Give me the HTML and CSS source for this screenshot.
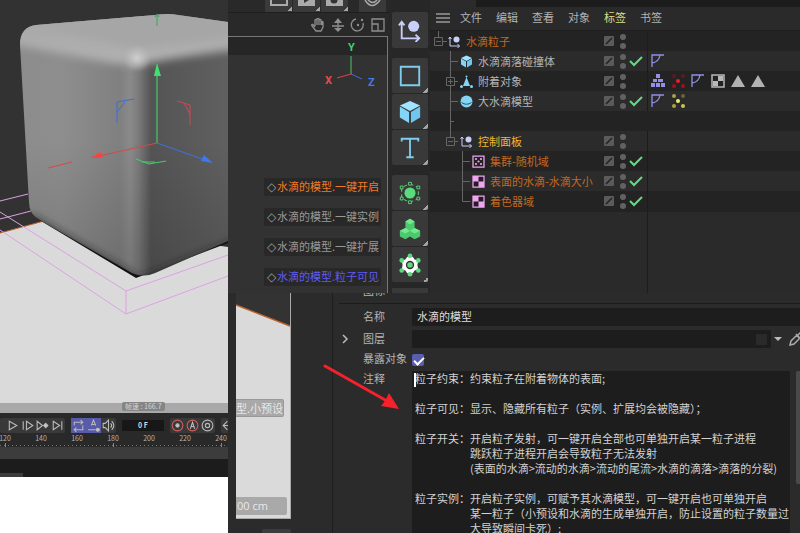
FILE: index.html
```html
<!DOCTYPE html>
<html lang="zh-CN">
  <head>
    <meta charset="utf-8">
    <title>水滴粒子</title>
    <link rel="stylesheet" href="styles.css">
  </head>
  <body>
    <!-- shared icons -->
    <svg class="defs" aria-hidden="true">
      <symbol id="null" viewBox="0 0 26 26">
        <path d="M4 5v17h19M1 8l3-4 3 4M19 18l4 4-4 4" fill="none" stroke="#c9cff8" stroke-width="2"/>
        <circle cx="17" cy="9" r="6" fill="#c9cff8"/>
      </symbol>
      <symbol id="cube" viewBox="0 0 26 26">
        <path d="M13 1l11 5-11 6L2 6z" fill="#a0e4ff"/>
        <path d="M2 7l10 6v12L2 19z" fill="#83d4f7"/>
        <path d="M24 7l-10 6v12l10-6z" fill="#6fc6ee"/>
      </symbol>
      <symbol id="cone" viewBox="0 0 26 26">
        <path d="M13 4l7 18H6z" fill="#83d4f7"/>
        <circle cx="13" cy="3" r="2" fill="#83d4f7"/>
        <circle cx="3" cy="23" r="3" fill="#83d4f7"/>
        <circle cx="23" cy="23" r="3" fill="#83d4f7"/>
      </symbol>
      <symbol id="sphere" viewBox="0 0 26 26">
        <circle cx="13" cy="13" r="12" fill="#83d4f7"/>
        <path d="M3 15q10 7 20 0" fill="none" stroke="#2a5668" stroke-width="2"/>
      </symbol>
      <symbol id="dice" viewBox="0 0 26 26">
        <path d="M2 2h22v22H2z" fill="none" stroke="#eda6ef" stroke-width="2.5"/>
        <g fill="#eda6ef"><circle cx="8" cy="8" r="2.2"/><circle cx="18" cy="8" r="2.2"/><circle cx="13" cy="13" r="2.2"/><circle cx="8" cy="18" r="2.2"/><circle cx="18" cy="18" r="2.2"/></g>
      </symbol>
      <symbol id="checker" viewBox="0 0 26 26">
        <path d="M2 2h22v22H2z" fill="#251c26" stroke="#eda6ef" stroke-width="2.5"/>
        <path d="M2 2h11v11H2zM13 13h11v11H13z" fill="#eda6ef"/>
      </symbol>
      <symbol id="state" viewBox="0 0 40 20">
        <rect x="4" y="5" width="10" height="10" rx="1" fill="#5b5b5b"/>
        <path d="M6 13l6-6" stroke="#242424" stroke-width="1.6"/>
        <circle cx="23" cy="6" r="3" fill="#626262"/>
        <circle cx="23" cy="15" r="3" fill="#626262"/>
      </symbol>
      <symbol id="check" viewBox="0 0 14 20">
        <path d="M1 10l4 4 8-8" fill="none" stroke="#64dc84" stroke-width="2"/>
      </symbol>
      <symbol id="phong" viewBox="0 0 14 14">
        <path d="M1 13V1h12M1 9Q8 8 9 1" fill="none" stroke="#938fe8" stroke-width="1.3"/>
      </symbol>
      <symbol id="triangle" viewBox="0 0 14 14"><path d="M7 1l7 12H0z" fill="#b2b2b2"/></symbol>
    </svg>

    <main class="board">
      <section class="scene">
        <svg class="scene-view" viewBox="0 0 228 413" preserveAspectRatio="none">
          <defs>
            <linearGradient id="side" gradientUnits="userSpaceOnUse" x1="20" y1="0" x2="228" y2="0">
              <stop offset="0" stop-color="#8c8c8c"/>
              <stop offset=".2" stop-color="#8e8e8e"/>
              <stop offset=".48" stop-color="#808080"/>
              <stop offset=".53" stop-color="#8a8a8a"/>
              <stop offset=".57" stop-color="#7a7a7a"/>
              <stop offset=".63" stop-color="#545454"/>
              <stop offset="1" stop-color="#606060"/>
            </linearGradient>
            <linearGradient id="shade" x1="0" y1="0" x2="0" y2="1">
              <stop offset=".5" stop-color="#000" stop-opacity="0"/>
              <stop offset="1" stop-color="#000" stop-opacity=".15"/>
            </linearGradient>
            <linearGradient id="lid" x1="0" y1="0" x2="0" y2="1">
              <stop offset="0" stop-color="#a0a0a0"/>
              <stop offset="1" stop-color="#b2b2b2"/>
            </linearGradient>
            <radialGradient id="glow">
              <stop offset="0" stop-color="#d0d0d0"/>
              <stop offset="1" stop-color="#bbb" stop-opacity="0"/>
            </radialGradient>
            <filter id="soft" x="-20%" y="-20%" width="140%" height="140%"><feGaussianBlur stdDeviation="4"/></filter>
            <clipPath id="body"><path d="M20 45Q20 27 36 25L155 15Q168 13 178 15L228 22V241L155 273Q143 278 132 273L40 220Q29 214 29 202Z"/></clipPath>
          </defs>
          <rect width="228" height="413" fill="#323232"/>
          <path d="M0 233L44 221 228 247V413H0z" fill="#dadada"/>
          <path d="M0 233L44 221" stroke="#b8602a"/>
          <path d="M36 218L136 278 228 243V236L150 265z" fill="#111"/>
          <g clip-path="url(#body)">
            <rect width="228" height="280" fill="url(#side)"/>
            <rect width="228" height="280" fill="url(#shade)"/>
            <path d="M0 -10H250V48Q170 58 145 64 125 66 95 60L0 42z" fill="url(#lid)" filter="url(#soft)"/>
            <path d="M46 27L170 13 228 22V36L138 49z" fill="#a6a6a6" filter="url(#soft)"/>
            <circle cx="137" cy="58" r="14" fill="url(#glow)"/>
            <path d="M30 218L140 282 240 242" fill="none" stroke="#222" stroke-width="6" filter="url(#soft)"/>
          </g>
          <g fill="none" stroke="#dda0e2">
            <path d="M0 201l28-7M0 219l31-8M0 212l126 79 102-36M0 230l126 84 102-38M126 291v23"/>
          </g>
          <path d="M157 143V74" stroke="#3fe070"/>
          <path d="M157 63l4 13h-7z" fill="#3fe070"/>
          <path d="M157 26V15M155 17l2-3 2 3" stroke="#38a45a" fill="none"/>
          <path d="M157 143l-58 13M72 162l-24 6" stroke="#d54848"/>
          <path d="M90 158l11-6 2 6z" fill="#ff4040"/>
          <path d="M157 143l48 17" stroke="#3e72e0"/>
          <path d="M213 163l-9-8-3 6z" fill="#3c78ef"/>
          <path d="M117 123V102l17-3M117 112l8-10" stroke="#416bd0" fill="none"/>
          <path d="M177 101l13 4v20M184 103l6 11" stroke="#cf4852" fill="none"/>
          <path d="M136 159l13 5 17-3M142 162l13 0" stroke="#3fd06c" fill="none"/>
          <rect y="403" width="228" height="10" fill="#a9a9a9"/>
        </svg>
        <span class="speed">帧速 : 166.7</span>

        <div class="transport">
          <div class="keys">
            <button aria-label="播放"><svg viewBox="0 0 14 14"><path d="M4 3l7 4-7 4z"/></svg></button>
            <button aria-label="下一帧"><svg viewBox="0 0 14 14"><path d="M3 3v8M6 3l6 4-6 4z"/></svg></button>
            <button aria-label="下一关键帧"><svg viewBox="0 0 14 14"><path d="M2 3l5 4-5 4z"/><path d="M10 5l2 2-2 2-2-2z" fill="#ccc"/></svg></button>
            <button aria-label="末尾"><svg viewBox="0 0 14 14"><path d="M3 3l6 4-6 4zM11 3v8"/></svg></button>
          </div>
          <div class="keys toggles">
            <button class="on" aria-label="循环"><svg viewBox="0 0 14 14"><path d="M3 7V4h8M9 2l2 2-2 2M11 7v4H3M5 9l-2 2 2 2"/></svg></button>
            <button class="on" aria-label="自动"><svg viewBox="0 0 14 14"><path d="M5 7l2-5 2 5M6 6h2M2 11h7" stroke-dasharray="20 1"/><circle cx="11" cy="11" r="1.4" fill="#ccc"/></svg></button>
            <button aria-label="声音"><svg viewBox="0 0 14 14"><path d="M2 5h2l3-3v10L4 9H2zM9 5q2 2 0 4M10 3q4 4 0 8"/></svg></button>
          </div>
          <output class="frame">0 F</output>
          <div class="keys">
            <button aria-label="记录"><svg viewBox="0 0 14 14"><circle cx="7" cy="7" r="5" class="rec"/><circle cx="7" cy="7" r="1.500" fill="#ccc"/></svg></button>
            <button aria-label="自动记录"><svg viewBox="0 0 14 14"><circle cx="7" cy="7" r="5" class="rec"/><path d="M5 10l2-6 2 6M6 8h2"/></svg></button>
            <button aria-label="设置"><svg viewBox="0 0 14 14"><circle cx="7" cy="7" r="5"/><circle cx="7" cy="7" r="2"/></svg></button>
          </div>
          <div class="keys"><button aria-label="移动"><svg viewBox="0 0 14 14"><path d="M6 3L2 7l4 4M2 7h9M7 5v4"/></svg></button></div>
        </div>
        <div class="ruler">
          <span>120</span><span>140</span><span>160</span><span>180</span><span>200</span><span>220</span><span>240</span>
        </div>
        <div class="range"></div>
        <div class="status"></div>
      </section>

      <div class="workspace">
        <div class="upper">
          <section class="camera">
            <div class="render-bar">
              <button aria-label="渲染视图"><svg viewBox="0 0 26 12"><path d="M6 0v5h16V0" fill="none" stroke="#aaa" stroke-width="2"/></svg></button>
              <button aria-label="渲染"><svg viewBox="0 0 26 12"><path d="M5 0h17v6H5z" fill="#aaa"/><path d="M11 0v3l5-3" fill="#333"/></svg></button>
              <button aria-label="渲染设置"><svg viewBox="0 0 26 12"><path d="M5 0h17v6H5z" fill="#aaa"/><circle cx="13" cy="0" r="3.5" fill="#333"/></svg></button>
              <button class="apart" aria-label="材质"><svg viewBox="0 0 26 12"><path d="M6 0q7 11 15 0M9 0q5 5 9 0" fill="none" stroke="#aaa" stroke-width="1.5"/></svg></button>
            </div>
            <div class="nav-bar">
              <button aria-label="平移"><svg viewBox="0 0 16 16"><path d="M5 10L3 7.500Q1 7 2 9l4 5h5l2-4V5q-1-1-1 0v3M5 9V3q1-1 2 0v5M7 7V2q1-1 2 0v6M9 7V3q1-1 2 0v5"/></svg></button>
              <button aria-label="推拉"><svg viewBox="0 0 16 16"><path d="M8 2v12M2 9h12"/><path d="M8 1l4 5H4zM8 15l4-4H4z" class="dot"/></svg></button>
              <button aria-label="旋转"><svg viewBox="0 0 16 16"><path d="M6 2a6 6 0 1 0 7 4"/><circle cx="8" cy="8" r="1.200" class="dot"/><circle cx="12" cy="3" r="1.200" class="dot"/></svg></button>
              <button aria-label="切换视图"><svg viewBox="0 0 16 16"><path d="M2 2h12v12H2zM2 7h6v7"/></svg></button>
            </div>
            <div class="camera-view">
              <svg class="axes" viewBox="0 0 60 50">
                <path d="M30 31V13" stroke="#44c86c"/>
                <path d="M30 31l-14 4" stroke="#e04444"/>
                <path d="M30 31l11 5" stroke="#3d6fd8"/>
                <text x="27" y="8" fill="#42d26c">Y</text>
                <text x="4" y="41" fill="#e84a4a">X</text>
                <text x="47" y="43" fill="#3f7bea">Z</text>
              </svg>
              <ul class="hud">
                <li class="orange"><i>◇</i>水滴的模型.一键开启</li>
                <li><i>◇</i>水滴的模型.一键实例</li>
                <li><i>◇</i>水滴的模型.一键扩展</li>
                <li class="blue"><i>◇</i>水滴的模型.粒子可见</li>
              </ul>
            </div>
          </section>

          <nav class="tools">
            <div class="tool-group plain">
              <button aria-label="空白"><svg viewBox="0 0 26 26"><use href="#null"/></svg></button>
            </div>
            <div class="tool-group">
              <button aria-label="矩形"><svg viewBox="0 0 26 26"><path d="M3 3h20v20H3z" fill="none" stroke="#7fcdf0" stroke-width="2"/></svg></button>
              <button aria-label="立方体"><svg viewBox="0 0 26 26"><use href="#cube"/></svg></button>
              <button aria-label="文本"><svg viewBox="0 0 26 26"><path d="M4 6V3h18v3M13 3v20M9 23h8" fill="none" stroke="#7fcdf0" stroke-width="2"/></svg></button>
            </div>
            <div class="tool-group">
              <button aria-label="细分曲面"><svg viewBox="0 0 26 26"><circle cx="13" cy="13" r="6" fill="#5bdc7c"/><g fill="#333" stroke="#5bdc7c"><path d="M13 3l9 4v12l-9 4-9-4V7z" fill="none" stroke-dasharray="4 3"/><path d="M11.500 1.500h3v3h-3zM20.500 5.500h3v3h-3zM20.500 17.500h3v3h-3zM11.500 21.500h3v3h-3zM2.500 17.500h3v3h-3zM2.500 5.500h3v3h-3z"/></g></svg></button>
              <button aria-label="克隆"><svg viewBox="0 0 26 26"><path d="M13 2l5 3v7l6 3v6l-6 3-5-3-5 3-6-3v-6l6-3V5z" fill="#4cc96d"/><path d="M13 2l5 3-5 3-5-3zM8 12l5 3-5 3-6-3zM18 12l6 3-6 3-5-3z" fill="#72e88f"/></svg></button>
              <button aria-label="力场"><svg viewBox="0 0 26 26"><path d="M10 4h6l2 3 4 1-1 5 1 5-4 1-2 3h-6l-2-3-4-1 1-5-1-5 4-1z" fill="#fff"/><circle cx="13" cy="13" r="4.500" fill="#333"/><g fill="#5bdc7c"><circle cx="13" cy="13" r="3"/><circle cx="13" cy="3" r="2.500"/><circle cx="22" cy="8" r="2.500"/><circle cx="22" cy="19" r="2.500"/><circle cx="13" cy="23" r="2.500"/><circle cx="4" cy="19" r="2.500"/><circle cx="4" cy="8" r="2.500"/></g></svg></button>
            </div>
            <div class="tool-group rest"></div>
          </nav>

          <section class="objects">
            <div class="tabs"><span></span></div>
            <div class="menu">
              <button aria-label="菜单"><svg viewBox="0 0 14 12"><path d="M0 2h14M0 6h14M0 10h14" stroke="#999" stroke-width="1.500"/></svg></button>
              <button>文件</button>
              <button>编辑</button>
              <button>查看</button>
              <button>对象</button>
              <button class="active">标签</button>
              <button>书签</button>
            </div>
            <ul class="tree">
              <li>
                <div class="name orange"><svg class="guide root" viewBox="0 0 18 20"><path d="M8.500 0v6M4.500 6.500h8v8h-8zM6 10.500h5M13 10.500h4"/></svg><svg class="icon"><use href="#null"/></svg>水滴粒子</div>
                <div class="flags"><svg class="state"><use href="#state"/></svg></div>
                <div class="tags"></div>
              </li>
              <li>
                <div class="name"><svg class="guide" viewBox="0 0 30 20"><path d="M20.500 0v20M21 10.500h7"/></svg><svg class="icon"><use href="#cube"/></svg>水滴滴落碰撞体</div>
                <div class="flags"><svg class="state"><use href="#state"/></svg><svg class="check"><use href="#check"/></svg></div>
                <div class="tags"><svg><use href="#phong"/></svg></div>
              </li>
              <li>
                <div class="name"><svg class="guide" viewBox="0 0 30 20"><path d="M20.500 0v6M20.500 15v5M16.500 6.500h8v8h-8zM18 10.500h5M20.500 8v5M25 10.500h3"/></svg><svg class="icon"><use href="#cone"/></svg>附着对象</div>
                <div class="flags"><svg class="state"><use href="#state"/></svg></div>
                <div class="tags">
                  <svg viewBox="0 0 14 14"><path d="M5 0h4v4H5zM2 5h4v3H2zM7 5h5v3H7zM0 9h4v4H0zM5 9h4v4H5zM10 9h4v4h-4z" fill="#938fe8"/></svg>
                  <svg viewBox="0 0 14 14"><g fill="#a01116"><circle cx="3" cy="2" r="2" opacity=".5"/><circle cx="12" cy="2" r="2" opacity=".5"/><circle cx="7" cy="7" r="2" fill="#e8202a"/><circle cx="3" cy="12" r="2"/><circle cx="12" cy="12" r="2"/></g></svg>
                  <svg><use href="#phong"/></svg>
                  <svg viewBox="0 0 14 14"><path d="M1 1h12v12H1z" fill="#222" stroke="#b8b8b8" stroke-width="1.500"/><path d="M7 2h5v5H7zM2 7h5v5H2z" fill="#b8b8b8"/></svg>
                  <svg><use href="#triangle"/></svg>
                  <svg><use href="#triangle"/></svg>
                </div>
              </li>
              <li>
                <div class="name"><svg class="guide" viewBox="0 0 30 20"><path d="M20.500 0v20M21 10.500h7"/></svg><svg class="icon"><use href="#sphere"/></svg>大水滴模型</div>
                <div class="flags"><svg class="state"><use href="#state"/></svg><svg class="check"><use href="#check"/></svg></div>
                <div class="tags">
                  <svg><use href="#phong"/></svg>
                  <svg viewBox="0 0 14 14"><g fill="#a9a343"><circle cx="3" cy="2" r="2"/><circle cx="12" cy="2" r="2" opacity=".5"/><circle cx="7" cy="7" r="2" fill="#f0ec70"/><circle cx="3" cy="12" r="2"/><circle cx="12" cy="12" r="2" fill="#c9c353"/></g></svg>
                </div>
              </li>
              <li class="empty">
                <div class="name"><svg class="guide" viewBox="0 0 30 20"><path d="M20.500 0v20M21 10.500h3"/></svg></div>
              </li>
              <li>
                <div class="name yellow"><svg class="guide" viewBox="0 0 30 20"><path d="M20.500 0v6M16.500 6.500h8v8h-8zM18 10.500h5M25 10.500h3"/></svg><svg class="icon"><use href="#null"/></svg>控制面板</div>
                <div class="flags"><svg class="state"><use href="#state"/></svg></div>
                <div class="tags"></div>
              </li>
              <li>
                <div class="name orange"><svg class="guide leaf" viewBox="0 0 42 20"><path d="M32.500 0v20M33 10.500h7"/></svg><svg class="icon"><use href="#dice"/></svg>集群-随机域</div>
                <div class="flags"><svg class="state"><use href="#state"/></svg><svg class="check"><use href="#check"/></svg></div>
                <div class="tags"></div>
              </li>
              <li>
                <div class="name orange"><svg class="guide leaf" viewBox="0 0 42 20"><path d="M32.500 0v20M33 10.500h7"/></svg><svg class="icon"><use href="#checker"/></svg>表面的水滴-水滴大小</div>
                <div class="flags"><svg class="state"><use href="#state"/></svg><svg class="check"><use href="#check"/></svg></div>
                <div class="tags"></div>
              </li>
              <li>
                <div class="name orange"><svg class="guide leaf" viewBox="0 0 42 20"><path d="M32.500 0v10.500h8"/></svg><svg class="icon"><use href="#checker"/></svg>着色器域</div>
                <div class="flags"><svg class="state"><use href="#state"/></svg><svg class="check"><use href="#check"/></svg></div>
                <div class="tags"></div>
              </li>
            </ul>
            <div class="tree-rest"></div>
          </section>
        </div>

        <div class="lower">
          <section class="preview">
            <div class="preview-view">
              <svg class="slope" viewBox="0 0 54 34" preserveAspectRatio="none"><path d="M0 0h54v33L0 12z" fill="#333"/><path d="M0 12l54 21" stroke="#b8602a" stroke-width="1.500"/></svg>
              <span class="chip preset">型.小预设</span>
              <span class="chip unit">00 cm</span>
            </div>
            <div class="preview-foot"><span></span></div>
          </section>

          <form class="attributes">
            <div class="heading"><span>图标</span></div>
            <div class="field">
              <label for="title">名称</label>
              <input id="title" type="text" value="水滴的模型">
            </div>
            <div class="field">
              <svg class="arrow" viewBox="0 0 8 10"><path d="M2 1l4 4-4 4" fill="none" stroke="#bbb" stroke-width="1.500"/></svg>
              <label for="layer">图层</label>
              <span class="layer-box"><input id="layer" type="text"><i></i></span>
              <svg class="drop" viewBox="0 0 8 6"><path d="M0 1h8L4 5z" fill="#bbb"/></svg>
              <svg class="picker" viewBox="0 0 12 14"><path d="M1 13l1-4 6-6 3 3-6 6zM7 2l4 5M9 3l3-3" fill="none" stroke="#aaa" stroke-width="1.500"/></svg>
            </div>
            <div class="field short">
              <label for="expose">暴露对象</label>
              <input id="expose" type="checkbox" checked>
            </div>
            <div class="field notes">
              <label for="notes">注释</label>
              <div class="notes-box">
                <textarea id="notes" spellcheck="false" wrap="off">粒子约束：约束粒子在附着物体的表面;

粒子可见：显示、隐藏所有粒子（实例、扩展均会被隐藏）；

粒子开关：开启粒子发射，可一键开启全部也可单独开启某一粒子进程
　　　　　跳跃粒子进程开启会导致粒子无法发射
　　　　　(表面的水滴&gt;流动的水滴&gt;流动的尾流&gt;水滴的滴落&gt;滴落的分裂)

粒子实例：开启粒子实例，可赋予其水滴模型，可一键开启也可单独开启
　　　　　某一粒子（小预设和水滴的生成单独开启，防止设置的粒子数量过
　　　　　大导致瞬间卡死）;</textarea>
                <span class="caret"></span>
              </div>
              <div class="scrollbar"><span></span></div>
            </div>
          </form>

          <svg class="pointer" viewBox="0 0 78 50">
            <path d="M2 3l62 35" stroke="#f5222d" stroke-width="3" stroke-linecap="round"/>
            <path d="M76 46L58 43l4-5 4-8z" fill="#f5222d"/>
          </svg>
        </div>
      </div>
    </main>
  </body>
</html>
```

FILE: styles.css
```css
* {
  box-sizing: border-box;
}

body {
  margin: 0;
  background: #fff;
  color: #b4b4b4;
  font: 11px/15px "Noto Sans CJK SC", sans-serif;
  overflow: hidden;
}

button,
input,
textarea {
  margin: 0;
  padding: 0;
  border: 0;
  background: none;
  color: inherit;
  font: inherit;
  outline: none;
}

svg {
  display: block;
  flex: none;
}

ul {
  margin: 0;
  padding: 0;
  list-style: none;
}

.defs {
  position: absolute;
  width: 0;
  height: 0;
}

.board {
  display: flex;
  height: 100vh;
}

/* left: scene and timeline */
.scene {
  position: relative;
  flex: 0 0 228px;
  overflow: hidden;
}

.scene-view {
  width: 100%;
  height: 413px;
}

.speed {
  position: absolute;
  left: 122px;
  top: 402px;
  padding: 0 3px;
  border-radius: 2px;
  background: #858585;
  color: #d5d5d5;
  font-size: 7px;
  line-height: 9px;
}

.transport {
  display: flex;
  gap: 6px;
  height: 20px;
  padding-top: 5px;
  background: #292929;
  overflow: hidden;
}

.keys {
  display: flex;
  flex: none;
  height: 15px;
  background: #393939;
  border-radius: 2px;
}

.keys:first-child {
  padding-left: 5px;
}

.keys button {
  width: 15px;
  height: 15px;
}

.keys svg {
  width: 15px;
  height: 15px;
  fill: none;
  stroke: #bbb;
}

.keys .rec {
  stroke: #d65c5c;
}

.keys .on {
  background: #585ba9;
}

.frame {
  flex: 0 0 42px;
  height: 11px;
  margin-top: 2px;
  background: #171717;
  color: #ddd;
  font-size: 7px;
  font-weight: bold;
  line-height: 10px;
  text-align: center;
}

.ruler {
  display: flex;
  height: 14px;
  padding-right: 1px;
  background:
    repeating-linear-gradient(90deg, #777 0 1px, transparent 1px 4px) 0 12px / 100% 1px no-repeat,
    #292929;
  font-size: 7px;
  line-height: 10px;
}

.ruler span {
  flex: 0 0 36px;
  text-align: center;
}

.ruler span:first-child {
  margin-left: -13px;
}

.ruler span:nth-child(3n + 1) {
  background: linear-gradient(#888, #888) 50% 10px / 1px 4px no-repeat;
}

.range {
  height: 12px;
  background: #3c3c3c;
}

.status {
  height: 18px;
  background: linear-gradient(#3c3c3c, #3c3c3c) 0 100% / 23px 4px no-repeat, #1c1c1c;
}

.workspace {
  display: flex;
  flex: 1;
  flex-direction: column;
  min-width: 0;
  background: #2b2b2b;
}

.upper {
  display: flex;
  flex: none;
  height: 293px;
}

/* middle view */
.camera {
  display: flex;
  flex: 0 0 162px;
  flex-direction: column;
  background: #292929;
}

.render-bar {
  display: flex;
  gap: 1px;
  height: 13px;
  padding-left: 37px;
  border-bottom: 1px solid #1f1f1f;
}

.render-bar button {
  width: 27px;
  height: 12px;
  background: linear-gradient(135deg, transparent 50%, #a5a5a5 50%) 100% 7px / 4px 4px no-repeat, #3a3a3a;
}

.render-bar svg {
  width: 26px;
  height: 12px;
}

.render-bar .apart {
  margin-left: 10px;
  background: #3a3a3a;
}

.nav-bar {
  display: flex;
  justify-content: flex-end;
  gap: 4px;
  height: 23px;
  padding: 4px 4px 0 0;
}

.nav-bar button {
  height: 16px;
}

.nav-bar svg {
  width: 16px;
  height: 16px;
  fill: none;
  stroke: #8e8e8e;
  stroke-width: 1.3;
}

.nav-bar .dot {
  fill: #8e8e8e;
  stroke: none;
}

.camera-view {
  display: flex;
  flex: 1;
  flex-direction: column;
  justify-content: space-between;
  align-items: flex-end;
  margin-right: 2px;
  padding: 6px 6px 7px 0;
  border-top: 1px solid #777;
  border-right: 1px solid #777;
  background: linear-gradient(#262626, #262626) 0 0 / 100% 18px no-repeat, #323232;
}

.axes {
  width: 60px;
  height: 50px;
  overflow: visible;
  font: bold 11px Roboto, sans-serif;
}

.hud {
  display: grid;
  gap: 12px;
}

.hud li {
  height: 18px;
  padding: 0 2px 0 3px;
  border-radius: 2px;
  background: #282828;
  color: #999;
  line-height: 16px;
  white-space: nowrap;
}

.hud i {
  display: inline-block;
  width: 10px;
  color: #999;
  font: 12px/14px "DejaVu Sans", sans-serif;
}

.hud .orange {
  color: #f07a24;
}

.hud .blue {
  color: #605cf0;
}

/* tool column */
.tools {
  display: flex;
  flex: 0 0 40px;
  flex-direction: column;
  gap: 10px;
  padding: 12px 2px 0;
  background: #272727;
  overflow: hidden;
}

.tool-group {
  display: grid;
  flex: none;
  gap: 1px;
}

.tool-group button {
  display: grid;
  place-items: center;
  width: 36px;
  height: 35px;
  border-radius: 2px;
  background: linear-gradient(135deg, transparent 50%, #a5a5a5 50%) 31px 30px / 5px 5px no-repeat, #393939;
}

.tool-group.plain button {
  height: 36px;
  background: #393939;
}

.tool-group svg {
  width: 24px;
  height: 24px;
}

.tool-group.rest {
  height: 12px;
  margin-top: -4px;
  background: #393939;
}

/* object manager */
.objects {
  display: flex;
  flex: 1;
  flex-direction: column;
  min-width: 0;
  background: #2a2a2a;
}

.tabs {
  height: 7px;
  background: #1c1c1c;
}

.tabs span {
  display: block;
  width: 46px;
  height: 7px;
  background: #2b2b2b;
}

.menu {
  display: flex;
  align-items: center;
  gap: 14px;
  height: 24px;
  padding: 0 6px 2px;
  border-bottom: 1px solid #1e1e1e;
}

.menu button:first-child {
  margin-right: -4px;
}

.menu svg {
  width: 14px;
  height: 12px;
}

.menu .active {
  color: #dedc83;
}

.tree li {
  display: grid;
  grid-template-columns: 170px 48px 1fr;
  height: 20px;
  background: #2b2b2b;
}

.tree li:nth-child(odd) {
  background: #232323;
}

.tree .empty {
  background: #252525;
}

.tree .name {
  display: flex;
  align-items: center;
  white-space: nowrap;
}

.tree .orange {
  color: #c4691f;
}

.tree .yellow {
  color: #f2b632;
}

.guide {
  width: 30px;
  height: 20px;
  fill: none;
  stroke: #666;
}

.guide.root {
  width: 18px;
}

.guide.leaf {
  width: 42px;
}

.icon {
  width: 13px;
  height: 13px;
  margin-right: 5px;
}

.flags {
  display: flex;
  border-right: 1px solid #1c1c1c;
}

.state {
  width: 40px;
  height: 20px;
  margin-right: -11px;
}

.check {
  width: 14px;
  height: 20px;
}

.tags {
  display: flex;
  align-items: center;
  gap: 6px;
  padding-left: 3px;
}

.tags svg {
  width: 14px;
  height: 14px;
}

.tree-rest {
  flex: 1;
  border-top: 1px solid #222;
  background: linear-gradient(#1d1d1d, #1d1d1d) 217px 0 / 1px 100% no-repeat;
}

/* lower part */
.lower {
  position: relative;
  display: flex;
  flex: 1;
  min-height: 0;
}

.preview {
  display: flex;
  flex: 0 0 104px;
  flex-direction: column;
  padding: 0 41px 0 8px;
}

.preview-view {
  display: flex;
  flex: 1;
  flex-direction: column;
  align-items: flex-start;
  border: solid #aaa;
  border-width: 0 1px 1px 0;
  background: #dadada;
  overflow: hidden;
}

.slope {
  width: 100%;
  height: 34px;
}

.chip {
  border-radius: 0 2px 2px 0;
  background: #a9a9a9;
  color: #e8e8e8;
  line-height: 18px;
  white-space: nowrap;
}

.preset {
  margin-top: 72px;
  border: 1px solid #999;
  border-left: 0;
  line-height: 16px;
}

.unit {
  width: 51px;
  margin: auto 0 3px;
  padding-left: 1px;
  font-family: "Open Sans", sans-serif;
}

.preview-foot {
  height: 14px;
  padding: 10px 0 0 26px;
}

.preview-foot span {
  display: block;
  height: 4px;
  border-radius: 2px 2px 0 0;
  background: #3c3c3c;
}

.attributes {
  display: flex;
  flex: 1;
  flex-direction: column;
  gap: 4px;
  min-width: 0;
  border-left: 1px solid #1e1e1e;
}

.heading {
  display: flex;
  align-items: flex-start;
  height: 11px;
  margin-left: 6px;
  padding-left: 24px;
  border-bottom: 1px solid #1c1c1c;
}

.heading span {
  display: flex;
  align-items: flex-end;
  height: 5px;
  overflow: hidden;
}

.field {
  position: relative;
  display: flex;
  flex: none;
  align-items: center;
  height: 18px;
  padding-left: 30px;
}

.field label {
  flex: 0 0 49px;
  padding-bottom: 2px;
  white-space: nowrap;
}

.field input[type="text"] {
  flex: 1;
  min-width: 0;
  height: 18px;
  padding: 0 0 2px 5px;
  border-radius: 2px 0 0 2px;
  background: #1d1d1d;
  color: #ddd;
}

.arrow {
  width: 8px;
  height: 10px;
  margin: 0 14px 0 -22px;
}

.layer-box {
  display: flex;
  flex: 1;
  align-items: center;
  padding-right: 4px;
  border-radius: 2px;
  background: #1d1d1d;
}

.layer-box i {
  width: 11px;
  height: 11px;
  background: #2a2a2a;
}

.drop {
  width: 8px;
  height: 6px;
  margin: 0 7px 0 3px;
}

.picker {
  width: 12px;
  height: 14px;
  margin-right: -1px;
}

.field.short {
  height: 15px;
}

.field input[type="checkbox"] {
  width: 12px;
  height: 12px;
  border-radius: 2px;
  background: #5a5eb0;
  appearance: none;
}

.field input[type="checkbox"]:checked::before {
  content: "";
  display: block;
  width: 8px;
  height: 4px;
  margin: 3px 2px;
  border: solid #fff;
  border-width: 0 0 2px 2px;
  transform: rotate(-45deg);
}

.field.notes {
  flex: 1;
  align-items: stretch;
  min-height: 0;
}

.notes-box {
  position: relative;
  flex: 1;
  min-width: 0;
}

.notes textarea {
  display: block;
  width: 100%;
  height: 100%;
  padding: 0 0 0 3px;
  background: #1d1d1d;
  color: #d2d2d2;
  line-height: 15px;
  white-space: pre;
  resize: none;
  overflow: hidden;
}

.caret {
  position: absolute;
  left: 2px;
  top: 2px;
  width: 2px;
  height: 14px;
  background: #fff;
}

.scrollbar {
  flex: 0 0 10px;
  padding-left: 6px;
}

.scrollbar span {
  display: block;
  height: 70%;
  border-radius: 2px 0 0 2px;
  background: #4a4a4a;
}

/* arrow pointing at the notes */
.pointer {
  position: absolute;
  left: 95px;
  top: 70px;
  width: 78px;
  height: 50px;
}
```
